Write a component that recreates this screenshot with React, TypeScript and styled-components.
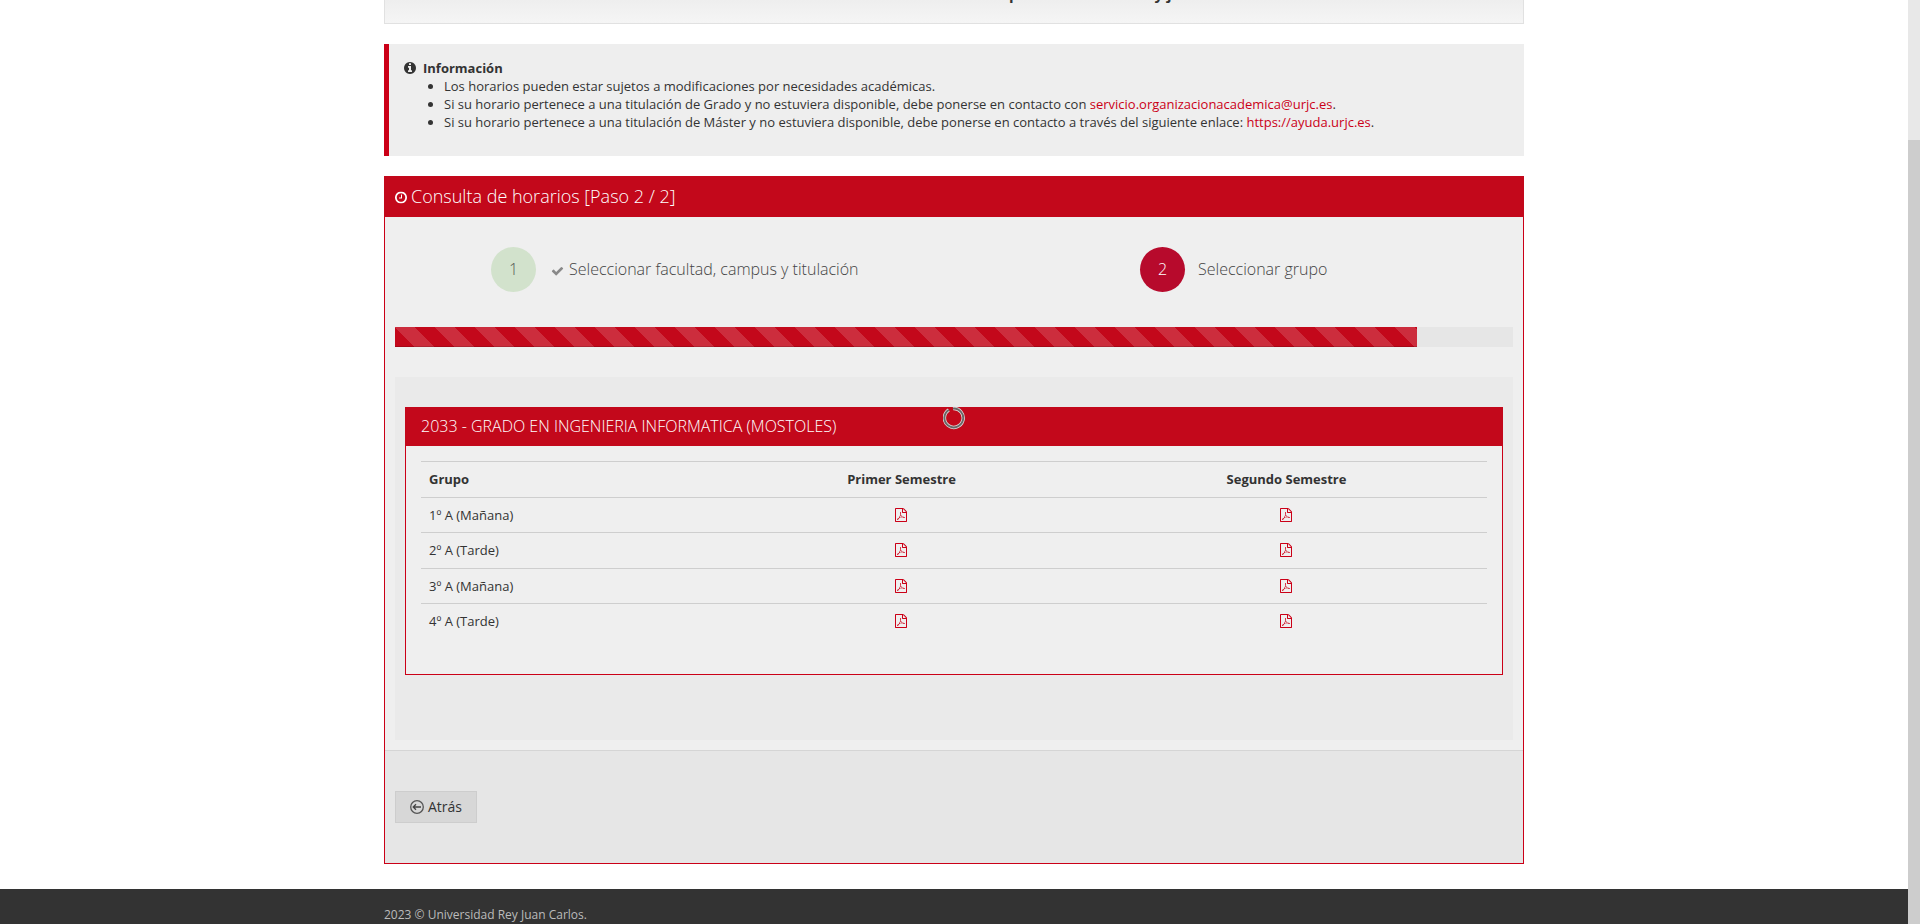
import React from 'react';
import styled, { createGlobalStyle } from 'styled-components';

const RED = '#c3081b';
const LINK = '#cb0017';

const GlobalStyle = createGlobalStyle`
  *, *::before, *::after { box-sizing: border-box; }
  html, body { margin: 0; padding: 0; }
  body {
    background: #fff;
    color: #333;
    font-family: 'Open Sans', sans-serif;
    font-size: 13px;
    line-height: 18px;
    overflow: hidden;
  }
`;

const Screen = styled.div`
  display: flex;
  height: 924px;
  overflow: hidden;
`;

const Page = styled.div`
  flex: 1;
  display: flex;
  flex-direction: column;
  min-width: 0;
`;

const Scrollbar = styled.div`
  width: 12px;
  background: #e8e8e8;
  padding-top: 140px;
`;

const Thumb = styled.div`
  height: 784px;
  background: #cdcdcd;
`;

const Container = styled.div`
  width: 1140px;
  margin: 0 auto;
`;

const Banner = styled.div`
  height: 24px;
  border: 1px solid #e1e1e1;
  border-top: 0;
  background: linear-gradient(#eee, #f5f5f5);
  overflow: hidden;
  display: flex;
  font-size: 15px;
  font-weight: 700;
  line-height: 20px;
`;

const BannerWord = styled.span<{ $gap: number }>`
  margin-left: ${(p) => p.$gap}px;
  margin-top: -16px;
`;

const Note = styled.section`
  margin-top: 20px;
  height: 112px;
  border-left: 5px solid ${LINK};
  background: #eee;
  padding: 15px;
`;

const NoteTitle = styled.div`
  display: flex;
  align-items: center;
  gap: 7px;
  height: 18px;
  font-weight: 700;
`;

const NoteList = styled.ul`
  margin: 0;
  padding: 0 0 0 40px;
`;

const Link = styled.a`
  color: ${LINK};
  text-decoration: none;
`;

const Panel = styled.section`
  margin-top: 20px;
  height: 688px;
  border: 1px solid ${LINK};
  border-top: 0;
  background: #efefef;
`;

const PanelHeader = styled.h1`
  margin: 0 -1px;
  height: 41px;
  padding: 0 0 2px 10.5px;
  display: flex;
  align-items: center;
  gap: 4.5px;
  background: ${RED};
  color: #fff;
  font-size: 18px;
  font-weight: 300;
`;

const PanelBody = styled.div`
  padding: 30px 10px 10px;
`;

const Steps = styled.div`
  display: flex;
  height: 45px;
`;

const Step = styled.div<{ $start: number; $width: number }>`
  width: ${(p) => p.$width}px;
  padding-left: ${(p) => p.$start}px;
  display: flex;
  align-items: center;
  font-size: 16px;
  font-weight: 300;
  color: #333;
`;

const StepNumber = styled.span<{ $done?: boolean }>`
  width: 45px;
  height: 45px;
  padding-bottom: 2px;
  border-radius: 50%;
  display: flex;
  align-items: center;
  justify-content: center;
  background: ${(p) => (p.$done ? '#d2e2cc' : '#b70a2c')};
  color: ${(p) => (p.$done ? '#555' : '#fff')};
`;

const StepText = styled.span<{ $gap: number }>`
  margin-left: ${(p) => p.$gap}px;
  padding-bottom: 2px;
  display: flex;
  align-items: center;
  gap: 5px;
  color: #444;
`;

const Progress = styled.div`
  margin-top: 35px;
  height: 20px;
  background: #e6e6e6;
`;

const ProgressBar = styled.div`
  width: 1022px;
  height: 20px;
  background: linear-gradient(
      45deg,
      rgba(255, 255, 255, 0.15) 25%,
      transparent 25%,
      transparent 50%,
      rgba(255, 255, 255, 0.15) 50%,
      rgba(255, 255, 255, 0.15) 75%,
      transparent 75%
    ) 0 0 / 40px 40px ${RED};
  box-shadow: inset 0 -1px 0 rgba(0, 0, 0, 0.15);
`;

const Tab = styled.div`
  position: relative;
  margin-top: 30px;
  height: 363px;
  padding: 30px 10px 0;
  background: #eaeaea;
`;

const Card = styled.div`
  height: 268px;
  border: 1px solid ${LINK};
  border-top: 0;
  background: #efefef;
`;

const CardHeader = styled.h2`
  margin: 0 -1px;
  height: 39px;
  padding: 0 0 2px 16px;
  display: flex;
  align-items: center;
  background: ${RED};
  color: #fff;
  font-size: 16px;
  font-weight: 300;
`;

const Table = styled.table`
  width: 1066px;
  margin: 15px 0 0 15px;
  border-collapse: separate;
  border-spacing: 0;
  table-layout: fixed;
`;

const Col = styled.col<{ $w: number }>`
  width: ${(p) => p.$w}px;
`;

const Row = styled.tr<{ $h: number }>`
  height: ${(p) => p.$h}px;
`;

const Cell = styled.td<{ $center?: boolean; $bold?: boolean }>`
  padding: 8px 8px 0;
  border-top: 1px solid #cecece;
  vertical-align: top;
  text-align: ${(p) => (p.$center ? 'center' : 'left')};
  font-weight: ${(p) => (p.$bold ? 700 : 400)};
`;

const FileLink = styled(Link)`
  margin-right: 2px;
`;

const Spinner = styled.svg`
  position: absolute;
  left: 548px;
  top: 29px;
`;

const Actions = styled.div`
  height: 113px;
  border-top: 1px solid #d5d5d5;
  background: #e6e6e6;
  padding: 40px 10px 0;
`;

const BackButton = styled.button`
  width: 82px;
  height: 32px;
  display: flex;
  align-items: center;
  gap: 4px;
  padding: 0 0 0 14px;
  border: 1px solid #cdcdcd;
  background: #d7d7d7;
  color: #333;
  font: 400 14px/20px 'Open Sans', sans-serif;
`;

const Footer = styled.footer`
  margin-top: 25px;
  flex: 1;
  background: #333;
  color: #bbb;
  font-size: 12px;
  padding-top: 17px;
`;

const Glyph = styled.svg<{ $y?: number }>`
  display: inline-block;
  flex: none;
  fill: currentColor;
  vertical-align: middle;
  transform: translateY(${(p) => p.$y ?? 0}px);
`;

const INFO =
  'M1152 1376v-160q0-14-9-23t-23-9h-96v-512q0-14-9-23t-23-9h-320q-14 0-23 9t-9 23v160q0 14 9 23t23 9h96v320h-96q-14 0-23 9t-9 23v160q0 14 9 23t23 9h448q14 0 23-9t9-23zm-128-896v-160q0-14-9-23t-23-9h-192q-14 0-23 9t-9 23v160q0 14 9 23t23 9h192q14 0 23-9t9-23zm640 416q0 209-103 385.5t-279.5 279.5-385.5 103-385.5-103-279.5-279.5-103-385.5 103-385.5 279.5-279.5 385.5-103 385.5 103 279.5 279.5 103 385.5z';
const CLOCK =
  'M1024 544v448q0 14-9 23t-23 9h-320q-14 0-23-9t-9-23v-64q0-14 9-23t23-9h224v-352q0-14 9-23t23-9h64q14 0 23 9t9 23zm416 352q0-148-73-273t-198-198-273-73-273 73-198 198-73 273 73 273 198 198 273 73 273-73 198-198 73-273zm224 0q0 209-103 385.5t-279.5 279.5-385.5 103-385.5-103-279.5-279.5-103-385.5 103-385.5 279.5-279.5 385.5-103 385.5 103 279.5 279.5 103 385.5z';
const CHECK =
  'M1671 566q0 40-28 68l-724 724-136 136q-28 28-68 28t-68-28l-136-136-362-362q-28-28-28-68t28-68l136-136q28-28 68-28t68 28l294 295 656-657q28-28 68-28t68 28l136 136q28 28 28 68z';
const PDF =
  'M1468 380q28 28 48 76t20 88v1152q0 40-28 68t-68 28h-1344q-40 0-68-28t-28-68v-1600q0-40 28-68t68-28h896q40 0 88 20t76 48zm-444-244v376h376q-10-29-22-41l-313-313q-12-12-41-22zm384 1528v-1024h-416q-40 0-68-28t-28-68v-416h-768v1536h1280zm-514-593q33 26 84 56 59-7 117-7 147 0 177 49 16 22 2 52 0 1-1 2l-2 2v1q-6 38-71 38-48 0-115-20t-130-53q-221 24-392 83-153 262-242 262-15 0-28-7l-24-12q-1-1-6-5-10-10-6-36 9-40 56-91.5t132-96.5q14-9 23 6 2 2 2 4 52-85 107-197 68-136 104-262-24-82-30.5-159.5t6.5-127.5q11-40 42-40h22q23 0 35 15 18 21 9 68-2 6-4 8 1 3 1 8v30q-2 123-14 192 55 164 146 238zm-576 411q52-24 137-158-51 40-87.5 84t-49.5 74zm398-920q-15 42-2 132 1-7 7-44 0-3 7-43 1-4 4-8-1-1-1-2-1-2-1-3-1-22-13-36 0 1-1 2v2zm-124 661q135-54 284-81-2-1-13-9.5t-16-13.5q-76-67-127-176-27 86-83 197-30 56-45 83zm646-16q-24-24-140-24 76 28 124 28 14 0 18-1 0-1-2-3z';

const PdfLink = () => (
  <FileLink>
    <Glyph width="12" height="14" viewBox="0 0 1536 1792" $y={-2}>
      <path d={PDF} />
    </Glyph>
  </FileLink>
);

const GROUPS = [
  { name: '1º A (Mañana)', height: 35 },
  { name: '2º A (Tarde)', height: 36 },
  { name: '3º A (Mañana)', height: 35 },
  { name: '4º A (Tarde)', height: 36 },
];

export default function App() {
  return (
    <>
      <GlobalStyle />
      <Screen>
        <Page>
          <Container>
            <Banner>
              <BannerWord $gap={624}>p</BannerWord>
              <BannerWord $gap={136}>y j</BannerWord>
            </Banner>

            <Note>
              <NoteTitle>
                <Glyph width="12" height="12" viewBox="128 128 1536 1536">
                  <path d={INFO} />
                </Glyph>
                Información
              </NoteTitle>
              <NoteList>
                <li>Los horarios pueden estar sujetos a modificaciones por necesidades académicas.</li>
                <li>
                  Si su horario pertenece a una titulación de Grado y no estuviera disponible, debe ponerse en contacto con{' '}
                  <Link>servicio.organizacionacademica@urjc.es</Link>.
                </li>
                <li>
                  Si su horario pertenece a una titulación de Máster y no estuviera disponible, debe ponerse en contacto a
                  través del siguiente enlace: <Link>https://ayuda.urjc.es</Link>.
                </li>
              </NoteList>
            </Note>

            <Panel>
              <PanelHeader>
                <Glyph width="12" height="12" viewBox="128 128 1536 1536" $y={1.5}>
                  <path d={CLOCK} />
                </Glyph>
                Consulta de horarios [Paso 2 / 2]
              </PanelHeader>
              <PanelBody>
                <Steps>
                  <Step $start={96} $width={559}>
                    <StepNumber $done>1</StepNumber>
                    <StepText $gap={15}>
                      <Glyph width="13" height="13" viewBox="0 0 1792 1792" fillOpacity={0.6} $y={2.5}>
                        <path d={CHECK} />
                      </Glyph>
                      Seleccionar facultad, campus y titulación
                    </StepText>
                  </Step>
                  <Step $start={186} $width={559}>
                    <StepNumber>2</StepNumber>
                    <StepText $gap={13}>Seleccionar grupo</StepText>
                  </Step>
                </Steps>
                <Progress>
                  <ProgressBar />
                </Progress>
                <Tab>
                  <Card>
                    <CardHeader>2033 - GRADO EN INGENIERIA INFORMATICA (MOSTOLES)</CardHeader>
                    <Table>
                      <colgroup>
                        <Col $w={296} />
                        <Col $w={369} />
                        <Col $w={401} />
                      </colgroup>
                      <tbody>
                        <Row $h={36}>
                          <Cell $bold>Grupo</Cell>
                          <Cell $bold $center>Primer Semestre</Cell>
                          <Cell $bold $center>Segundo Semestre</Cell>
                        </Row>
                        {GROUPS.map((g) => (
                          <Row key={g.name} $h={g.height}>
                            <Cell>{g.name}</Cell>
                            <Cell $center><PdfLink /></Cell>
                            <Cell $center><PdfLink /></Cell>
                          </Row>
                        ))}
                      </tbody>
                    </Table>
                  </Card>
                  <Spinner width="22" height="24" viewBox="0 0 22 24" fill="none">
                    <path d="M10 2.6a9.4 9.4 0 1 1-4.2 1.4" stroke="#ddd" strokeWidth="3.4" />
                    <path d="M10 2.6a9.4 9.4 0 1 1-4.2 1.4" stroke="#6b6666" strokeWidth="1.9" />
                  </Spinner>
                </Tab>
              </PanelBody>
              <Actions>
                <BackButton>
                  <Glyph width="14" height="14" viewBox="0 0 14 14">
                    <circle cx="7" cy="7" r="6.3" fill="none" stroke="#555" strokeWidth="1.3" />
                    <path d="M11 7H3.4M6 4.2 3.2 7 6 9.8" fill="none" stroke="#444" strokeWidth="1.3" />
                  </Glyph>
                  Atrás
                </BackButton>
              </Actions>
            </Panel>
          </Container>
          <Footer>
            <Container>2023 © Universidad Rey Juan Carlos.</Container>
          </Footer>
        </Page>
        <Scrollbar>
          <Thumb />
        </Scrollbar>
      </Screen>
    </>
  );
}
